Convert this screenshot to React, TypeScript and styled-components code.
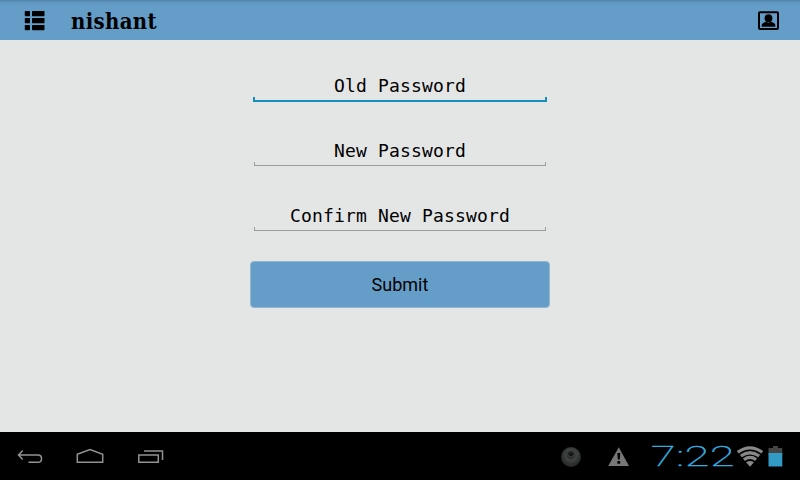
import React from "react";
import styled, { createGlobalStyle } from "styled-components";

const GlobalStyle = createGlobalStyle`
  html, body { margin: 0; padding: 0; background: #000; }
  * { box-sizing: border-box; }
`;

const Screen = styled.div`
  display: flex;
  flex-direction: column;
  width: 800px;
  height: 480px;
  overflow: hidden;
  background: #e4e5e5;
  color: #000;
`;

const ActionBar = styled.header`
  display: flex;
  align-items: center;
  height: 40px;
  padding: 1px 20px 0 24px;
  background: linear-gradient(#4a7aa0 0, #5990b8 1px, #6299c2 3px, #649ec8 8px, #649ec8 100%);
`;

const Title = styled.h1`
  flex: 1;
  margin: 0 0 0 25px;
  font: bold 22px/38px "DejaVu Serif Condensed", "DejaVu Serif", serif;
  font-stretch: condensed;
  letter-spacing: 0.3px;
`;

const Icon = styled.svg`
  display: block;
  flex: none;
`;

const Form = styled.form`
  display: flex;
  flex: 1;
  flex-direction: column;
  align-items: center;
  padding-top: 30px;
`;

const Field = styled.div<{ $active?: boolean }>`
  display: flex;
  flex-direction: column;
  justify-content: flex-end;
  width: ${(p) => (p.$active ? 294 : 292)}px;
  height: 32px;
  margin-bottom: ${(p) => (p.$active ? 32 : 33)}px;

  &:nth-of-type(3) {
    margin-bottom: 30px;
  }
`;

const Hint = styled.label`
  height: 23px;
  font: 18px/24px "DejaVu Sans Mono", monospace;
  letter-spacing: 0.163px;
  text-align: center;
  white-space: pre;
`;

const Underline = styled.div<{ $active?: boolean }>`
  height: ${(p) => (p.$active ? 5 : 4)}px;
  border: solid ${(p) => (p.$active ? "#168fbf" : "#9b9d9d")};
  border-width: ${(p) => (p.$active ? "0 2px 2px" : "0 1px 1px")};
`;

const SubmitButton = styled.button`
  width: 300px;
  height: 47px;
  padding: 1px 0 0;
  border: 1px solid #91b6d0;
  border-radius: 4px;
  background: #649ec8;
  color: #000;
  font: 18px/24px Roboto, sans-serif;
`;

const SystemBar = styled.footer`
  display: flex;
  align-items: center;
  height: 48px;
  padding: 1px 16px 0 16px;
  background: #000;
`;

const NavKeys = styled.div`
  display: flex;
  flex: 1;
  gap: 32px;
  padding-top: 1px;
`;

const Status = styled.div`
  display: flex;
  align-items: center;
`;

const ClockBox = styled.div`
  width: 82px;
  height: 30px;
  margin: 0 3px 0 22px;
`;

const Clock = styled.span`
  display: block;
  width: max-content;
  color: #35b1e1;
  font: 100 28px/30px Roboto, sans-serif;
  letter-spacing: 0.4px;
  -webkit-text-stroke: 0.4px #35b1e1;
  transform: scaleX(1.6);
  transform-origin: 0 50%;
`;

const Warning = styled(Icon)`
  margin-left: 24px;
`;

const hints = ["Old Password", "New Password", "Confirm New Password"];

export default function App() {
  return (
    <>
      <GlobalStyle />
      <Screen>
        <ActionBar>
          <Icon width="22" height="22" viewBox="0 0 22 22">
            {[0.9, 7.9, 14.9].map((y) => (
              <React.Fragment key={y}>
                <rect x="0.8" y={y} width="5.2" height="5.4" rx="0.7" />
                <rect x="8" y={y} width="12.5" height="5.4" rx="0.7" />
              </React.Fragment>
            ))}
          </Icon>
          <Title>nishant</Title>
          <Icon width="22" height="20" viewBox="0 0 22 20">
            <rect x="1" y="1.2" width="19" height="16.800" rx="1" fill="none" stroke="#000" strokeWidth="2" />
            <circle cx="10.5" cy="7.2" r="3.9" />
            <path d="M3.700 15.800v-2c.7-1.800 2.900-2.700 4.600-3 .9.9 3.500.9 4.400 0 1.700.3 3.900 1.200 4.600 3v2z" />
          </Icon>
        </ActionBar>
        <Form>
          {hints.map((hint, i) => (
            <Field key={hint} $active={i === 0}>
              <Hint>{hint}</Hint>
              <Underline $active={i === 0} />
            </Field>
          ))}
          <SubmitButton type="button">Submit</SubmitButton>
        </Form>
        <SystemBar>
          <NavKeys>
            <Icon width="28" height="24" viewBox="0 0 28 24" fill="none" stroke="#929292" strokeWidth="1.5">
              <path d="M6.7 5.5 2.5 10l4.2 4.5M2.8 10H22c4.7 0 4.7 7.3 0 7.3h-9.5" />
            </Icon>
            <Icon width="28" height="24" viewBox="0 0 28 24" fill="none" stroke="#929292" strokeWidth="1.5">
              <path d="M1.3 9.3 14 4.6l12.7 4.7v8H1.3z" />
            </Icon>
            <Icon width="28" height="24" viewBox="0 0 28 24" fill="none" stroke="#929292" strokeWidth="1.5">
              <path d="M2.8 10h19.5v7.3H2.8zM8 6.1h18.5V15" />
            </Icon>
          </NavKeys>
          <Status>
            <Icon width="22" height="22" viewBox="0 0 22 22">
              <defs>
                <radialGradient id="orb" cx="50%" cy="40%">
                  <stop offset="0" stopColor="#111" />
                  <stop offset="0.25" stopColor="#1b1d1d" />
                  <stop offset="0.5" stopColor="#414444" />
                  <stop offset="1" stopColor="#2b2d2d" />
                </radialGradient>
              </defs>
              <circle cx="12" cy="11" r="9.9" fill="url(#orb)" />
              <path d="M8.5 8.5 10.5 11h3l2-2.5" fill="none" stroke="#565959" strokeWidth="0.8" />
            </Icon>
            <Warning width="24" height="24" viewBox="0 0 24 24">
              <path d="M13.800 2.200 24 21H3.200z" fill="#777" />
              <path d="M12.300 8h3l-.5 6.500h-2zM12.400 15.900h2.800v2.800h-2.800z" />
            </Warning>
            <ClockBox>
              <Clock>7:22</Clock>
            </ClockBox>
            <Icon width="28" height="24" viewBox="0 0 28 24" fill="none" stroke="#888" strokeWidth="3.2">
              <path d="M1.700 7.200Q14-1.500 26.300 7.200M4.800 11q9.200-6.500 18.400 0M7.900 14.600q6.100-4.300 12.200 0" />
              <path d="M10 17.200q4-2.600 8 0L14 21.700z" fill="#888" stroke="none" />
            </Icon>
            <Icon width="20" height="24" viewBox="0 0 20 24">
              <path d="M9 1h5v2h4.300V10H4.500V3H9z" fill="#454545" />
              <path d="M4.500 8h13.800v13.500H4.500z" fill="#319bc6" />
            </Icon>
          </Status>
        </SystemBar>
      </Screen>
    </>
  );
}
